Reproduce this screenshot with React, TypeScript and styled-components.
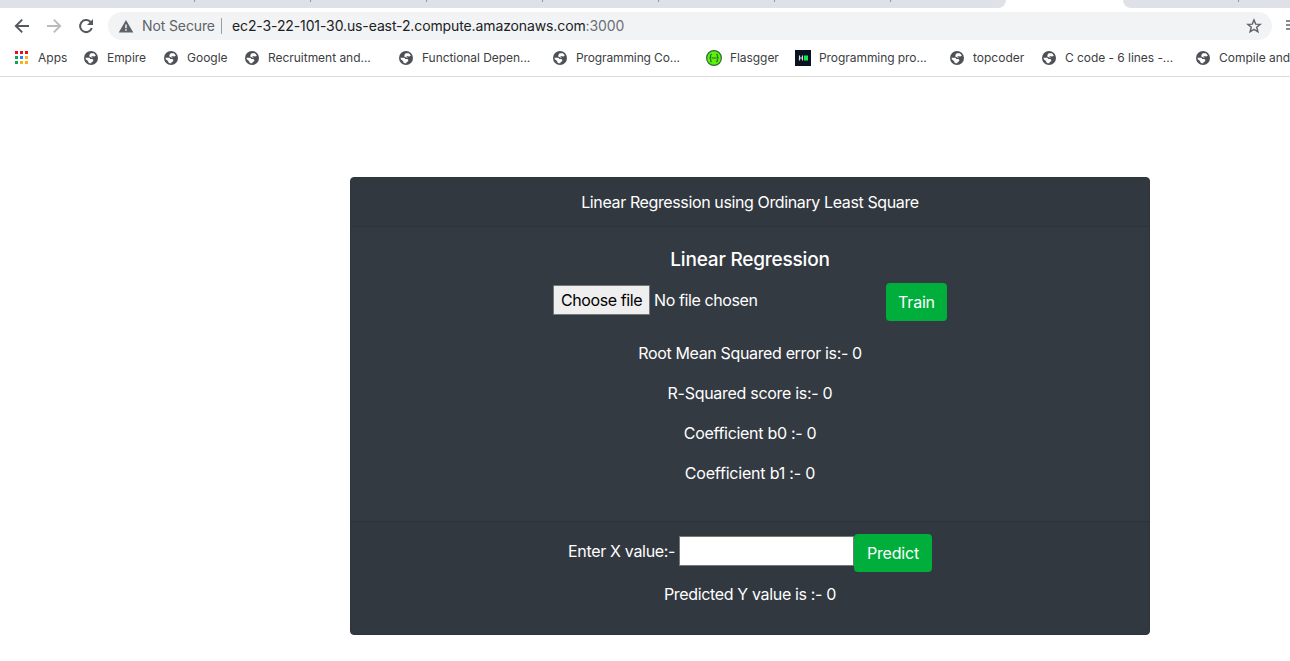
import React from 'react';
import styled, { createGlobalStyle } from 'styled-components';

const GlobalStyle = createGlobalStyle`
  *, *::before, *::after { box-sizing: border-box; }
  body {
    margin: 0;
    background: #fff;
    color: #fff;
    font: 400 16px/24px Inter, 'Liberation Sans', sans-serif;
    overflow: hidden;
  }
  button, input { font: inherit; letter-spacing: inherit; }
`;

const Page = styled.div`
  width: 100%;
  height: 661px;
  overflow: hidden;
`;

const TabStrip = styled.div`
  display: flex;
  height: 8px;
  background: #fff;
`;

const TabGroup = styled.div<{ $width: number; $start: number; $side: 'left' | 'right' }>`
  display: flex;
  flex: none;
  width: ${p => p.$width}px;
  padding-left: ${p => p.$start}px;
  gap: 115px;
  overflow: hidden;
  background: #dee1e8;
  border-radius: ${p => (p.$side === 'left' ? '0 0 8px 0' : '0 0 0 8px')};
  margin-right: ${p => (p.$side === 'left' ? 117 : 0)}px;
`;

const TabDivider = styled.span`
  flex: none;
  width: 1px;
  height: 2px;
  background: #94979e;
`;

const Toolbar = styled.div`
  display: flex;
  align-items: center;
  height: 36px;
  padding-left: 12px;
  svg { flex: none; display: block; }
`;

const NavButton = styled.span`
  flex: none;
  width: 32px;
  height: 20px;
`;

const AddressBar = styled.div`
  display: flex;
  align-items: center;
  flex: none;
  width: 1164px;
  height: 28px;
  padding: 0 10px;
  border-radius: 14px;
  background: #f1f3f4;
  font-size: 14px;
  white-space: pre;
`;

const Security = styled.span`
  width: 72px;
  margin-left: 8px;
  color: #5f6368;
  letter-spacing: -0.12px;
`;

const Separator = styled.span`
  width: 1px;
  height: 16px;
  margin: 0 10px 0 7px;
  background: #9a9da1;
`;

const Url = styled.span`
  flex: 1;
  color: #202124;
  letter-spacing: -0.115px;
  span { color: #6b6f74; }
`;

const MenuIcon = styled.span`
  flex: none;
  margin-left: 14px;
  width: 8px;
  height: 20px;
`;

const Bookmarks = styled.div`
  display: flex;
  height: 33px;
  padding: 6px 0 0 14px;
  border-bottom: 1px solid #dcdcdc;
  overflow: hidden;
`;

const Bookmark = styled.div<{ $width: number }>`
  display: flex;
  flex: none;
  align-items: flex-start;
  gap: 8px;
  width: ${p => p.$width}px;
  font-size: 12px;
  line-height: 16px;
  white-space: pre;
  color: #3c4043;
  svg { flex: none; }
`;

const BookmarkLabel = styled.span<{ $tracking: number }>`
  letter-spacing: ${p => p.$tracking}px;
`;

const Card = styled.main`
  width: 800px;
  height: 458px;
  margin: 100px 0 0 350px;
  display: flex;
  flex-direction: column;
  background: #343a42;
  border: 1px solid #2e343b;
  border-radius: 4px;
  text-align: center;
  letter-spacing: -0.2px;
  overflow: hidden;
`;

const CardHeader = styled.header`
  height: 49px;
  padding-top: 12px;
  background: #32383f;
  border-bottom: 1px solid #2d3239;
  letter-spacing: -0.38px;
`;

const CardBody = styled.section`
  height: 294px;
  padding-top: 21px;
`;

const Title = styled.h5`
  margin: 0 0 11px;
  font-size: 19px;
  font-weight: 500;
  line-height: 24px;
`;

const FormRow = styled.div`
  display: flex;
  justify-content: center;
  align-items: flex-start;
`;

const FilePicker = styled.div`
  display: flex;
  align-items: center;
  gap: 4px;
  width: 333px;
  height: 30px;
  margin-top: 2px;
  letter-spacing: -0.4px;
`;

const FileButton = styled.button`
  width: 97px;
  height: 30px;
  padding: 0;
  border: 1px solid #777;
  border-radius: 1px;
  background: #efefef;
  color: #000;
`;

const ActionButton = styled.button<{ $width: number }>`
  width: ${p => p.$width}px;
  height: 38px;
  padding: 0;
  border: 0;
  border-radius: 4px;
  background: #00ae3b;
  color: #fff;
`;

const Metrics = styled.div`
  margin-top: 20px;
`;

const Line = styled.p<{ $tracking: number }>`
  margin: 0 0 16px;
  letter-spacing: ${p => p.$tracking}px;
`;

const CardFooter = styled.footer`
  flex: 1;
  padding-top: 12px;
  background: #32383f;
  border-top: 1px solid #2d3239;
`;

const Prediction = styled(Line)`
  margin-top: 10px;
`;

const FieldLabel = styled.label`
  width: 111px;
  padding-top: 5px;
  text-align: left;
  white-space: nowrap;
  letter-spacing: -0.32px;
`;

const NumberInput = styled.input`
  width: 175px;
  height: 30px;
  margin-top: 2px;
  padding: 1px 2px;
  border: 1px solid #777;
  border-radius: 0;
  background: #fff;
  outline: 0;
`;

const Globe = () => (
  <svg width="16" height="16" viewBox="0 0 16 16">
    <circle cx="8" cy="8" r="7" fill="#4d5156" />
    <path d="M8.200 3.200h2.600c1 .7 1.700 1.600 2 2.600-1.100.7-2.300.8-3.300.3-.6-.3-1-.1-1.400.3l-1.600-.6c-.2-1.300.5-2.300 1.700-2.600z" fill="#fff" />
    <path
      d="M2.500 7.700h3.300c1 0 1.400.6 1.400 1.400h1.700c.9 0 1.400.6 1.400 1.400 0 1.100-1 1.400-1.800 1.500v1.300c-3.100.2-5.700-2.100-6-5.600z"
      fill="#fff"
    />
    <path d="M2.300 8.600c1 1.700 2.400 1.600 3 3.100.2.700.5 1.100 1.100 1.400-2.600-.4-4.200-2.400-4.100-4.500z" fill="#4d5156" />
    <path d="M6.500 5.800c.6 1 2.200.7 2.900 1.600" fill="none" stroke="#fff" strokeWidth="1.100" />
  </svg>
);

const APP_COLORS = ['#f00a14', '#f00a14', '#f00a14', '#0da358', '#1a87ff', '#ffae17', '#0da358', '#ffae17', '#ffae17'];

const AppsGrid = () => (
  <svg width="16" height="16" viewBox="0 0 16 16">
    {APP_COLORS.map((color, i) => (
      <rect key={i} x={1 + (i % 3) * 5} y={1 + Math.floor(i / 3) * 5} width="3" height="3" fill={color} />
    ))}
  </svg>
);

const Swagger = () => (
  <svg width="16" height="16" viewBox="0 0 16 16">
    <circle cx="8" cy="8" r="7.400" fill="#5df208" stroke="#2e6b3f" strokeWidth="1.200" />
    <path
      d="M5.800 4.300c-1.400 0-1.100 1-1.100 2.100S4 8 3.200 8c.8 0 1.500.5 1.500 1.600s-.3 2.100 1.100 2.100M10.200 4.300c1.400 0 1.100 1 1.100 2.100S12 8 12.800 8c-.8 0-1.500.5-1.500 1.600s.3 2.100-1.100 2.100M5.500 8h5"
      fill="none"
      stroke="#226636"
      strokeWidth="1.100"
    />
  </svg>
);

const HackerRank = () => (
  <svg width="16" height="16" viewBox="0 0 16 16">
    <rect width="16" height="16" fill="#0a121f" />
    <path d="M4.500 5.500v5M7.500 5.500v5M4.500 8h3" stroke="#d5d8dc" strokeWidth="1.200" />
    <rect x="9" y="5.500" width="4" height="5" fill="#0bea5c" />
  </svg>
);

const ICONS = { apps: AppsGrid, globe: Globe, swagger: Swagger, hacker: HackerRank };

const BOOKMARKS: { icon: keyof typeof ICONS; label: string; width: number; tracking: number }[] = [
  { icon: 'apps', label: 'Apps', width: 69, tracking: 0 },
  { icon: 'globe', label: 'Empire', width: 80, tracking: -0.05 },
  { icon: 'globe', label: 'Google', width: 81, tracking: 0 },
  { icon: 'globe', label: 'Recruitment and...', width: 154, tracking: -0.03 },
  { icon: 'globe', label: 'Functional Depen...', width: 154, tracking: -0.06 },
  { icon: 'globe', label: 'Programming Co...', width: 154, tracking: -0.12 },
  { icon: 'swagger', label: 'Flasgger', width: 89, tracking: -0.06 },
  { icon: 'hacker', label: 'Programming pro...', width: 154, tracking: -0.06 },
  { icon: 'globe', label: 'topcoder', width: 92, tracking: 0 },
  { icon: 'globe', label: 'C code - 6 lines -...', width: 154, tracking: -0.05 },
  { icon: 'globe', label: 'Compile and', width: 110, tracking: 0 },
];

export default function App() {
  return (
    <Page>
      <GlobalStyle />
      <TabStrip>
        <TabGroup $width={1006} $start={194} $side="left">
          {Array.from({ length: 7 }, (_, i) => <TabDivider key={i} />)}
        </TabGroup>
        <TabGroup $width={167} $start={115} $side="right">
          <TabDivider />
        </TabGroup>
      </TabStrip>

      <Toolbar>
        <NavButton>
          <svg width="20" height="20" viewBox="0 0 20 20" fill="none" stroke="#55595e" strokeWidth="1.900">
            <path d="M17 10H4M10.200 3.600 3.800 10l6.400 6.400" />
          </svg>
        </NavButton>
        <NavButton>
          <svg width="20" height="20" viewBox="0 0 20 20" fill="none" stroke="#b9bbbe" strokeWidth="1.900">
            <path d="M3 10h13M9.800 3.600l6.400 6.400-6.400 6.400" />
          </svg>
        </NavButton>
        <NavButton>
          <svg width="20" height="20" viewBox="0 0 20 20">
            <path d="M15.800 12A6 6 0 1 1 14.300 5.800L16 7.500" fill="none" stroke="#55595e" strokeWidth="2" />
            <path d="M17 3v6h-6z" fill="#55595e" />
          </svg>
        </NavButton>
        <AddressBar>
          <svg width="16" height="16" viewBox="0 0 16 16">
            <path d="M8 2 15.300 14.500H.7z" fill="#5f6368" />
            <path d="M8 6.500v3.700M8 11.200v1.500" stroke="#fff" strokeWidth="1.400" />
          </svg>
          <Security>Not Secure</Security>
          <Separator />
          <Url>ec2-3-22-101-30.us-east-2.compute.amazonaws.com<span>:3000</span></Url>
          <svg width="16" height="16" viewBox="0 0 16 16">
            <path
              d="m8 1.900 1.700 4.200 4.500.3-3.500 2.900 1.200 4.500L8 11.300l-3.900 2.500 1.200-4.500-3.500-2.900 4.500-.3z"
              fill="none"
              stroke="#5f6368"
              strokeWidth="1.400"
            />
          </svg>
        </AddressBar>
        <MenuIcon>
          <svg width="8" height="20" viewBox="0 0 8 20">
            <path d="M0 5h8M0 9h8M0 13h8" stroke="#5f6368" strokeWidth="1.500" />
          </svg>
        </MenuIcon>
      </Toolbar>

      <Bookmarks>
        {BOOKMARKS.map(({ icon, label, width, tracking }) => {
          const Icon = ICONS[icon];
          return (
            <Bookmark key={label} $width={width}>
              <Icon />
              <BookmarkLabel $tracking={tracking}>{label}</BookmarkLabel>
            </Bookmark>
          );
        })}
      </Bookmarks>

      <Card>
        <CardHeader>Linear Regression using Ordinary Least Square</CardHeader>
        <CardBody>
          <Title>Linear Regression</Title>
          <FormRow>
            <FilePicker>
              <FileButton>Choose file</FileButton>
              <span>No file chosen</span>
            </FilePicker>
            <ActionButton $width={61}>Train</ActionButton>
          </FormRow>
          <Metrics>
            <Line $tracking={-0.35}>Root Mean Squared error is:- 0</Line>
            <Line $tracking={-0.29}>R-Squared score is:- 0</Line>
            <Line $tracking={-0.3}>Coefficient b0 :- 0</Line>
            <Line $tracking={-0.2}>Coefficient b1 :- 0</Line>
          </Metrics>
        </CardBody>
        <CardFooter>
          <FormRow>
            <FieldLabel>Enter X value:-</FieldLabel>
            <NumberInput />
            <ActionButton $width={78}>Predict</ActionButton>
          </FormRow>
          <Prediction $tracking={-0.34}>Predicted Y value is :- 0</Prediction>
        </CardFooter>
      </Card>
    </Page>
  );
}
